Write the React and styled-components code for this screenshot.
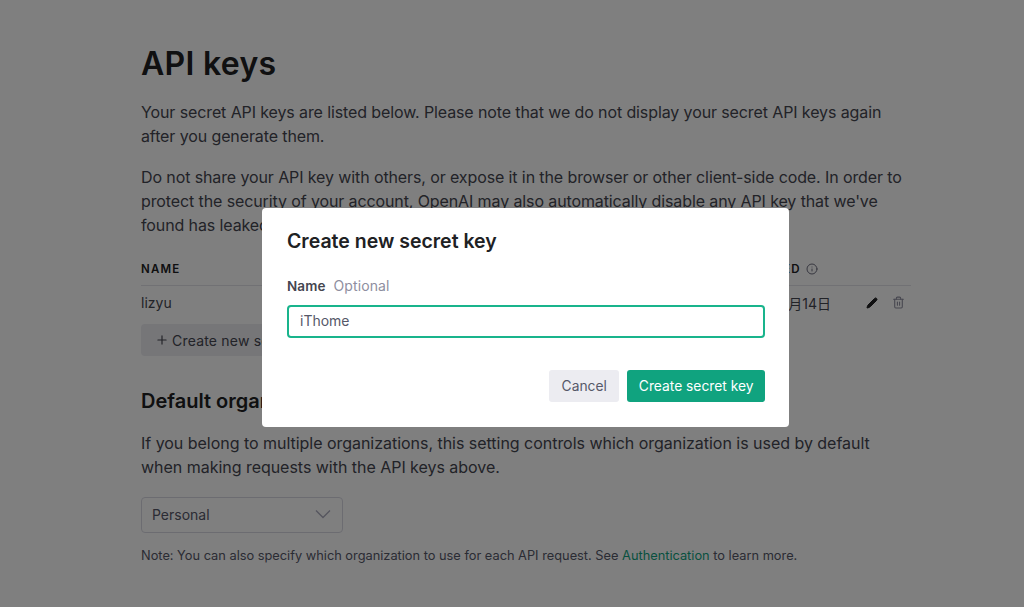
import React from "react";
import styled, { createGlobalStyle } from "styled-components";
import { Plus, Pencil, Trash2, Info } from "lucide-react";

const Global = createGlobalStyle`
  html, body { margin: 0; padding: 0; background: #fff; }
  body { font-family: Inter, "Noto Sans CJK TC", sans-serif; color: #454650; }
`;
const Page = styled.main`
  width: 770px; height: 607px; box-sizing: border-box; overflow: hidden;
  margin-left: 141px; padding-top: 42px;
`;
const Title = styled.h1`
  margin: 0 0 14px; font-size: 32px; line-height: 44px; font-weight: 600; color: #202123; letter-spacing: 0.3px;
`;
const Para = styled.p`
  margin: 0 0 17px; max-width: 762px; font-size: 16px; line-height: 24px; color: #454650;
  letter-spacing: ${(p) => p.$spacing || "-0.11px"};
`;
const Table = styled.div`
  margin-top: 15px;
`;
const HeadRow = styled.div`
  display: grid; grid-template-columns: 220px 200px 165px 1fr; height: 30px; align-items: center;
  border-bottom: 1px solid #e2e2e8; padding-bottom: 1px;
`;
const HeadCell = styled.div`
  font-size: 11.5px; font-weight: 600; letter-spacing: 1.2px; color: #202123;
  display: flex; align-items: center; gap: 5px; white-space: nowrap;
`;
const BodyRow = styled.div`
  display: grid; grid-template-columns: 220px 200px 165px 1fr; height: 33px; align-items: center;
`;
const Cell = styled.div`
  font-size: 14px; color: #454650; white-space: nowrap;
`;
const LastUsedCell = styled.div`
  display: flex; align-items: center; justify-content: space-between; padding: 0 6px 0 5px;
`;
const Actions = styled.div`
  display: flex; align-items: center; gap: 14px;
`;
const AddButton = styled.button`
  display: inline-flex; align-items: center; gap: 3px; height: 32px; padding: 0 14px; margin-top: 5px;
  border: 0; border-radius: 4px; background: #ececf1; color: #454650; font: 400 14px Inter, sans-serif; letter-spacing: 0.2px;
`;
const SubTitle = styled.h2`
  margin: 31px 0 16px; font-size: 20px; line-height: 28px; font-weight: 600; color: #202123;
`;
const Select = styled.div`
  display: flex; align-items: center; justify-content: space-between; width: 200px; height: 32px;
  margin-top: 18px; padding-bottom: 2px; border: 1px solid #d9d9e3; border-radius: 4px; color: #565869;
  font-size: 14px; text-indent: 10px;
`;
const Note = styled.p`
  margin: 15px 0 0; font-size: 12.8px; line-height: 16px; color: #565869;
`;
const LinkText = styled.a`
  color: #10a37f;
`;
const Chevron = styled.svg`
  width: 16px; height: 10px; margin-right: 11px; fill: none; stroke: #acacbe; stroke-width: 1.4;
`;
const Overlay = styled.div`
  position: fixed; inset: 0; background: rgba(0, 0, 0, 0.5); padding: 208px 0 0 262px; box-sizing: border-box;
`;
const Modal = styled.div`
  width: 527px; height: 219px; box-sizing: border-box; background: #fff; border-radius: 4px;
  padding: 19px 24px 0 25px;
`;
const ModalTitle = styled.h2`
  margin: 0 0 21px; font-size: 19.5px; line-height: 28px; font-weight: 600; color: #202123;
`;
const FieldLabel = styled.div`
  display: flex; gap: 8px; line-height: 20px; margin-bottom: 9px; letter-spacing: 0.1px;
`;
const LabelName = styled.span`
  font-size: 13.5px; font-weight: 600; color: #454650;
`;
const LabelHint = styled.span`
  font-size: 14px; color: #8e8ea0;
`;
const Input = styled.div`
  height: 33px; box-sizing: border-box; border: 2px solid #19b48c; border-radius: 4px;
  padding: 0 0 2px 11px; display: flex; align-items: center; font-size: 14px; color: #565869;
`;
const Footer = styled.div`
  display: flex; justify-content: flex-end; gap: 8px; margin-top: 32px;
`;
const ModalButton = styled.button`
  height: 32px; border: 0; border-radius: 3px; font: 400 13.8px Inter, sans-serif;
  padding: 0 ${(p) => (p.$primary ? "11.5px" : "12.5px")};
  background: ${(p) => (p.$primary ? "#10a37f" : "#ececf1")};
  color: ${(p) => (p.$primary ? "#fff" : "#565869")};
`;

export default function App() {
  return (
    <>
      <Global />
      <Page>
        <Title>API keys</Title>
        <Para>Your secret API keys are listed below. Please note that we do not display your secret API keys again after you generate them.</Para>
        <Para>Do not share your API key with others, or expose it in the browser or other client-side code. In order to protect the security of your account, OpenAI may also automatically disable any API key that we've found has leaked publicly.</Para>
        <Table>
          <HeadRow>
            <HeadCell>NAME</HeadCell>
            <HeadCell>KEY</HeadCell>
            <HeadCell>CREATED</HeadCell>
            <HeadCell>LAST USED <Info size={12} color="#6e6e80" /></HeadCell>
          </HeadRow>
          <BodyRow>
            <Cell>lizyu</Cell>
            <Cell>sk-...abcd</Cell>
            <Cell>2023年3月14日</Cell>
            <LastUsedCell>
              <Cell>2023年3月14日</Cell>
              <Actions>
                <Pencil size={12} color="#202123" fill="#202123" />
                <Trash2 size={13} color="#8e8ea0" />
              </Actions>
            </LastUsedCell>
          </BodyRow>
          <AddButton><Plus size={14} /> Create new secret key</AddButton>
        </Table>
        <SubTitle>Default organization</SubTitle>
        <Para $spacing="-0.03px">If you belong to multiple organizations, this setting controls which organization is used by default when making requests with the API keys above.</Para>
        <Select>Personal <Chevron viewBox="0 0 16 10"><path d="M1 1.5 L8 8.5 L15 1.5" /></Chevron></Select>
        <Note>Note: You can also specify which organization to use for each API request. See <LinkText>Authentication</LinkText> to learn more.</Note>
      </Page>
      <Overlay>
        <Modal>
          <ModalTitle>Create new secret key</ModalTitle>
          <FieldLabel><LabelName>Name</LabelName><LabelHint>Optional</LabelHint></FieldLabel>
          <Input>iThome</Input>
          <Footer>
            <ModalButton>Cancel</ModalButton>
            <ModalButton $primary>Create secret key</ModalButton>
          </Footer>
        </Modal>
      </Overlay>
    </>
  );
}
